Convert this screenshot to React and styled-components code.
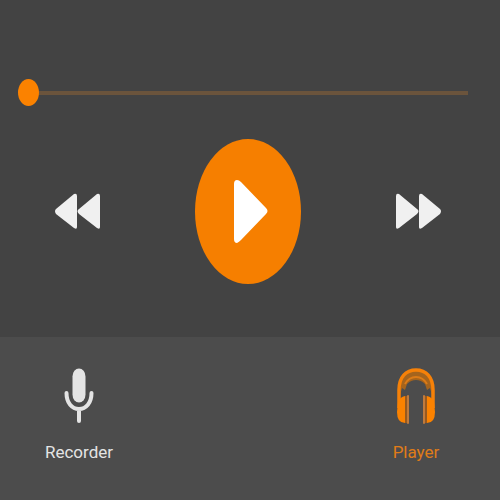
import React, { useState } from "react";
import styled, { createGlobalStyle } from "styled-components";

const GlobalStyle = createGlobalStyle`
  * {
    box-sizing: border-box;
  }
  body {
    margin: 0;
    background: #434343;
  }
`;

const Container = styled.div`
  min-height: 100vh;
  display: flex;
  flex-direction: column;
  font-family: Roboto, sans-serif;
`;

const Main = styled.main`
  flex: 1;
  padding: 79px 0 53px;
  background: #434343;
`;

const SeekBar = styled.div`
  display: flex;
  padding: 0 32px 0 18px;
`;

const Slider = styled.input`
  appearance: none;
  flex: 1;
  min-width: 0;
  height: 27px;
  margin: 0;
  background: transparent;
  cursor: pointer;

  &::-webkit-slider-runnable-track {
    height: 4px;
    background: #6b543c;
  }
  &::-webkit-slider-thumb {
    appearance: none;
    width: 21px;
    height: 27px;
    margin-top: -12px;
    border: none;
    border-radius: 50%;
    background: #fb8200;
  }
`;

const Controls = styled.div`
  display: flex;
  align-items: center;
  justify-content: space-between;
  margin-top: 33px;
  padding: 0 58px 0 54px;
`;

const Button = styled.button`
  display: flex;
  padding: 0;
  border: none;
  background: none;
  color: #f0f0f0;
  cursor: pointer;
`;

const PlayButton = styled(Button)`
  align-items: center;
  justify-content: center;
  width: 106px;
  height: 145px;
  border-radius: 50%;
  background: #f67f00;
  color: #fff;
`;

const Nav = styled.nav`
  display: flex;
  justify-content: space-between;
  align-items: flex-start;
  height: 163px;
  padding: 31px 34px 0 29px;
  background: #4c4c4c;
`;

const Tab = styled.button`
  display: flex;
  flex-direction: column;
  align-items: center;
  gap: 16px;
  width: 100px;
  padding: 0;
  border: none;
  background: none;
  color: ${(props) => (props.$active ? "#e07c18" : "#e4e4e4")};
  font-family: inherit;
  font-size: 17px;
  line-height: 22px;
  cursor: pointer;
`;

const SkipIcon = ({ back }) => (
  <svg width="47" height="38" viewBox="0 0 47 38" fill="currentColor" aria-hidden="true">
    <g transform={back ? "translate(47 0) scale(-1 1)" : undefined}>
      <path d="M1 3Q1 0 4 1L22 16Q25 18 22 21L4 35Q1 37 1 34Z" />
      <path d="M24 3Q24 0 27 1L45 16Q47 18 45 21L27 35Q24 37 24 34Z" />
    </g>
  </svg>
);

const PlayIcon = () => (
  <svg width="34" height="64" viewBox="0 0 34 64" fill="currentColor" overflow="visible" aria-hidden="true">
    {/* sits a little right of centre so the triangle looks balanced */}
    <path d="M3 4Q3 0 6 0Q8 0 10 2L35 28Q38 31 35 34L10 60Q8 62 6 63Q3 63 3 59Z" />
  </svg>
);

const MicIcon = () => (
  <svg width="30" height="57" viewBox="0 0 30 57" aria-hidden="true">
    <rect x="8.500" y="0.500" width="13" height="34" rx="6.500" ry="8" fill="currentColor" />
    <path
      d="M2.500 25C2.500 35 8 41 15 41S27.500 35 27.500 25M15 41V53"
      fill="none"
      stroke="currentColor"
      strokeWidth="4"
      strokeLinecap="round"
    />
  </svg>
);

const HeadphonesIcon = () => (
  <svg width="38" height="57" viewBox="0 0 38 57" aria-hidden="true">
    <path
      d="M3 27L4 14Q9 3 19 3T34 14L35 27L33 20L30 22L28 16Q24 12 19 12T10 16L8 22L5 20Z"
      fill="#a5641d"
    />
    <path d="M8 16Q12 9 19 9T30 16" fill="none" stroke="#dc7b17" strokeWidth="2" />
    <path
      d="M2 40V22C2 9 9 2 19 2S36 9 36 22V40"
      fill="none"
      stroke="#f68108"
      strokeWidth="3.5"
    />
    <path d="M1 34Q3 29 8 28V55Q0 55 0 44ZM37 34Q35 29 30 28V55Q38 55 38 44Z" fill="#fb8200" />
    <path d="M9 28V55M29 28V55" stroke="#97591f" strokeWidth="2" />
    <path d="M11 28V55M27 28V55" stroke="#c07a3c" strokeWidth="2" strokeLinecap="round" />
  </svg>
);

const App = () => {
  const [position, setPosition] = useState(0);
  const [tab, setTab] = useState("player");

  return (
    <>
      <GlobalStyle />
      <Container>
        <Main>
          <SeekBar>
            <Slider
              type="range"
              min="0"
              max="100"
              value={position}
              aria-label="Playback position"
              onChange={(e) => setPosition(Number(e.target.value))}
            />
          </SeekBar>
          <Controls>
            <Button aria-label="Rewind" onClick={() => setPosition(Math.max(0, position - 10))}>
              <SkipIcon back />
            </Button>
            <PlayButton aria-label="Play">
              <PlayIcon />
            </PlayButton>
            <Button aria-label="Fast forward" onClick={() => setPosition(Math.min(100, position + 10))}>
              <SkipIcon />
            </Button>
          </Controls>
        </Main>
        <Nav>
          <Tab $active={tab === "recorder"} onClick={() => setTab("recorder")}>
            <MicIcon />
            Recorder
          </Tab>
          <Tab $active={tab === "player"} onClick={() => setTab("player")}>
            <HeadphonesIcon />
            Player
          </Tab>
        </Nav>
      </Container>
    </>
  );
};

export default App;
